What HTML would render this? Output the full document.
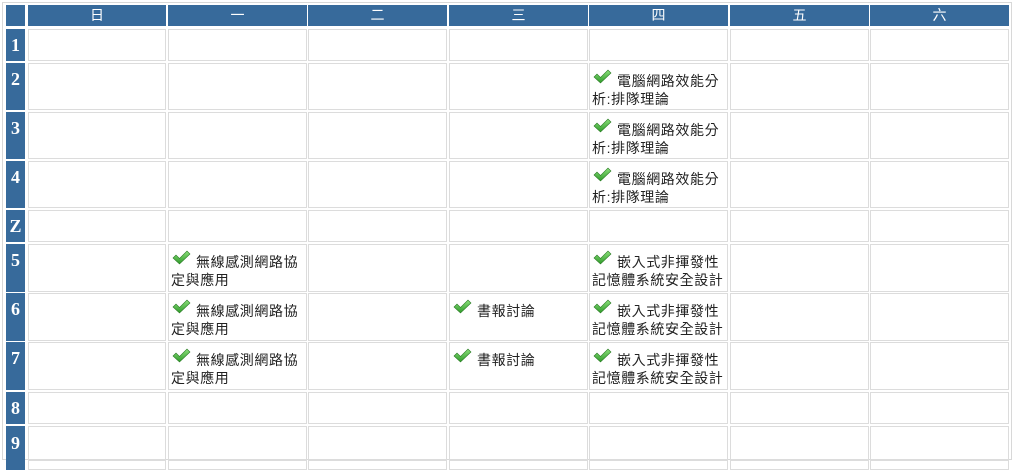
<!DOCTYPE html>
<html><head><meta charset="utf-8"><style>
body{margin:0;width:1016px;height:462px;background:#fff;position:relative;overflow:hidden;font-family:"Liberation Sans","Noto Sans CJK TC",sans-serif}
.o{position:absolute;left:2px;top:2px;width:1010px;height:458px;border:1px solid #d8d8d8;box-sizing:border-box}
.c{position:absolute;border:1px solid #dcdcdc;box-sizing:border-box;background:#fff}
.h{position:absolute;background:#376a9b;color:#fff;text-align:center;font-size:14px;line-height:21px;box-sizing:border-box}
.r{position:absolute;background:#376a9b;color:#fff;font:bold 18px "Liberation Serif",serif;text-align:center;left:6px;width:19px}
.t{position:absolute;left:2px;top:8px;width:138px;font-size:14px;letter-spacing:0.6px;line-height:18px;color:#222;text-indent:25px}
.t svg{position:absolute;left:1px;top:-3px}
</style></head><body>
<div class="o"></div>
<div id="g"></div>
<script>
var xs=[28,168,308,449,589,730,870],ws=[138,139,139,139,139,139,139];
var names=["日","一","二","三","四","五","六"];
var rows=[[29,32,"1"],[63,47,"2"],[112,47,"3"],[161,47,"4"],[210,32,"Z"],[244,48,"5"],[293,48,"6"],[342,48,"7"],[392,32,"8"],[426,34,"9"],[460,10,""]];
var ck='<svg width="19" height="15" viewBox="0 0 19 15"><defs><linearGradient id="gg" x1="0" y1="0" x2="0" y2="1"><stop offset="0" stop-color="#8be07a"/><stop offset="1" stop-color="#2f9a2a"/></linearGradient></defs><path d="M1 8 L4 5 L7.5 8.5 L15 1 L18 4 L7.5 14 Z" fill="url(#gg)" stroke="#2a7a25" stroke-width="0.6"/></svg>';
var data={"2,4":"電腦網路效能分析:排隊理論","3,4":"電腦網路效能分析:排隊理論","4,4":"電腦網路效能分析:排隊理論",
"5,1":"無線感測網路協定與應用","6,1":"無線感測網路協定與應用","7,1":"無線感測網路協定與應用",
"5,4":"嵌入式非揮發性記憶體系統安全設計","6,4":"嵌入式非揮發性記憶體系統安全設計","7,4":"嵌入式非揮發性記憶體系統安全設計",
"6,3":"書報討論","7,3":"書報討論"};
var h='<div class="h" style="left:6px;top:5px;width:19px;height:21px"></div>';
for(var i=0;i<7;i++)h+='<div class="h" style="left:'+xs[i]+'px;top:5px;width:'+ws[i]+'px;height:21px">'+names[i]+'</div>';
rows.forEach(function(r,ri){
 h+='<div class="r" style="top:'+r[0]+'px;height:'+r[1]+'px;line-height:'+(r[1]>40?32:r[1])+'px">'+r[2]+'</div>';
 for(var i=0;i<7;i++){
  var k=r[2]+","+i,t=data[k]||"";
  h+='<div class="c" style="left:'+xs[i]+'px;top:'+r[0]+'px;width:'+ws[i]+'px;height:'+r[1]+'px">'+(t?'<div class="t">'+ck+t+'</div>':'')+'</div>';
 }
});
document.getElementById('g').innerHTML=h;
</script>
</body></html>
